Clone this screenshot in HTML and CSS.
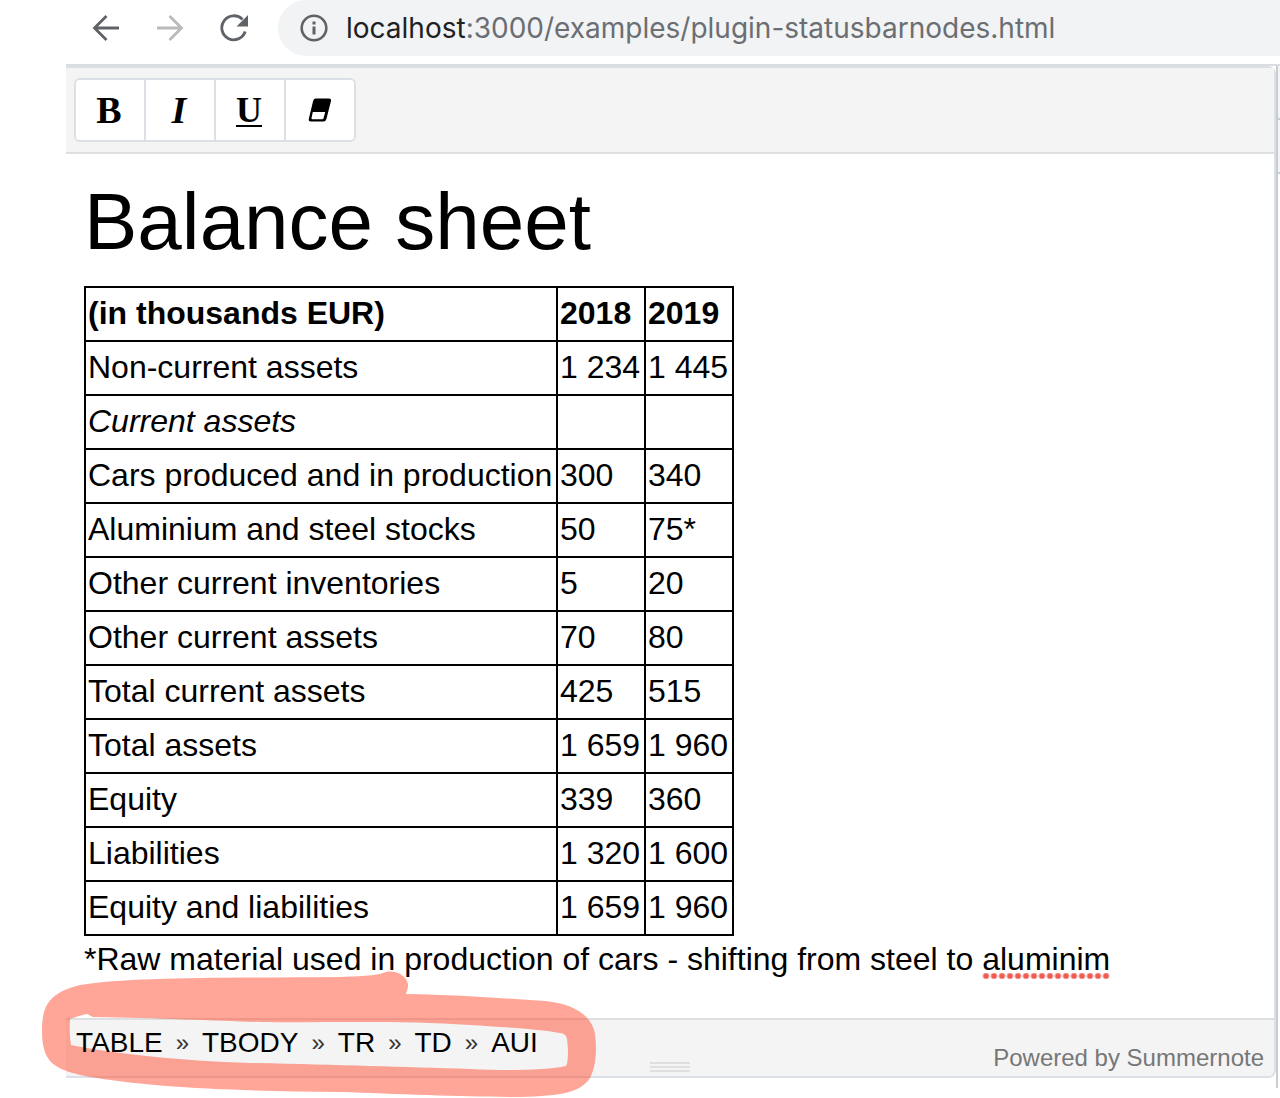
FILE: index.html
```html
<!DOCTYPE html>
<html lang="en">
<head>
<meta charset="utf-8">
<meta name="viewport" content="width=device-width, initial-scale=1">
<title>Summernote status bar nodes</title>
<link rel="stylesheet" href="styles.css">
</head>
<body>
<header class="browser">
  <nav class="browser-nav" aria-label="Browser">
    <button class="nav-button" type="button" aria-label="Back">
      <svg width="28" height="28" viewBox="0 0 28 28" fill="none" stroke="#5f6368" stroke-width="2.800"><path d="M27 14H3M14.500 2 2.500 14l12 12"/></svg>
    </button>
    <button class="nav-button" type="button" aria-label="Forward" disabled>
      <svg width="28" height="28" viewBox="0 0 28 28" fill="none" stroke="#bababc" stroke-width="2.800"><path d="M1 14h24M13.500 2l12 12-12 12"/></svg>
    </button>
    <button class="nav-button" type="button" aria-label="Reload">
      <svg width="28" height="28" viewBox="0 0 28 28"><path d="M25.200 17.500A12 12 0 1 1 22.500 5.500" fill="none" stroke="#5f6368" stroke-width="2.800"/><path d="M28 1v11.500H16.500z" fill="#5f6368"/></svg>
    </button>
  </nav>
  <div class="address">
    <svg class="info" width="28" height="28" viewBox="0 0 28 28"><circle cx="14" cy="14" r="12.300" fill="none" stroke="#5f6368" stroke-width="2.600"/><path d="M12.500 7.500h3v3h-3zM12.500 12.500h3v8h-3z" fill="#5f6368"/></svg>
    <div class="url" role="textbox" contenteditable="true" spellcheck="false" aria-label="Address"><span class="host">localhost</span>:3000/examples/plugin-statusbarnodes.html</div>
  </div>
</header>
<main class="page">
  <section class="editor">
    <div class="toolbar">
      <div class="button-group" role="group" aria-label="Font style">
        <button class="tool" type="button" aria-label="Bold">B</button>
        <button class="tool tool-italic" type="button" aria-label="Italic">I</button>
        <button class="tool tool-underline" type="button" aria-label="Underline">U</button>
        <button class="tool tool-eraser" type="button" aria-label="Remove font style">
          <svg width="24" height="24" viewBox="0 0 24 24"><path d="M7.500.500h13.300q2.800 0 2.200 2.500l-4.600 18q-.7 2.500-3 2.500H3q-2.800 0-2.200-2.500l4.300-18q.5-2.500 2.400-2.500z"/><path d="M4.800 14h12.400l-1.600 6q-.3 1.300-1.500 1.300H4.400q-1.200 0-.9-1.300z" fill="#fff"/></svg>
        </button>
      </div>
    </div>
    <article class="document">
      <h1 class="title">Balance sheet</h1>
      <table class="balance">
        <thead>
          <tr><th class="item">(in thousands EUR)</th><th class="year">2018</th><th class="year">2019</th></tr>
        </thead>
        <tbody>
          <tr><td>Non-current assets</td><td>1 234</td><td>1 445</td></tr>
          <tr><td><em>Current assets</em></td><td></td><td></td></tr>
          <tr><td>Cars produced and in production</td><td>300</td><td>340</td></tr>
          <tr><td>Aluminium and steel stocks</td><td>50</td><td>75*</td></tr>
          <tr><td>Other current inventories</td><td>5</td><td>20</td></tr>
          <tr><td>Other current assets</td><td>70</td><td>80</td></tr>
          <tr><td>Total current assets</td><td>425</td><td>515</td></tr>
          <tr><td>Total assets</td><td>1 659</td><td>1 960</td></tr>
          <tr><td>Equity</td><td>339</td><td>360</td></tr>
          <tr><td>Liabilities</td><td>1 320</td><td>1 600</td></tr>
          <tr><td>Equity and liabilities</td><td>1 659</td><td>1 960</td></tr>
        </tbody>
      </table>
      <p class="note">*Raw material used in production of cars - shifting from steel to <span class="misspelled">aluminim</span></p>
    </article>
    <footer class="statusbar">
      <div class="nodes"><span>TABLE</span><span class="sep">»</span><span>TBODY</span><span class="sep">»</span><span>TR</span><span class="sep">»</span><span>TD</span><span class="sep">»</span><span>AUI</span></div>
      <div class="grip"></div>
      <div class="powered">Powered by Summernote</div>
      <svg class="marker" width="556" height="128" viewBox="42 970 556 128" aria-hidden="true"><path fill="#ff4d31" fill-opacity=".5" fill-rule="evenodd" d="M42 1030C42 1003 52 992 80 985C130 977 220 978 340 977C370 976 378 975 386 972C400 969 412 981 407 990L406 994C460 995 500 998 545 1001C575 1004 592 1016 595 1034C597 1050 596 1066 590 1078C581 1092 562 1096 520 1097C470 1097 400 1094 340 1092C240 1091 150 1088 85 1076C53 1069 42 1062 42 1030Z M70 1019Q78 1016 87 1014L93 1017C160 1018 220 1021 260 1022C320 1023 400 1020 470 1025C500 1027 540 1029 560 1033C568 1034 567 1038 568 1050Q568 1064 566 1066C548 1070 510 1071 470 1069C400 1067 340 1065 250 1063C180 1061 110 1053 71 1045Q69 1034 70 1019Z"/></svg>
    </footer>
  </section>
  <aside class="side" aria-hidden="true">
    <div class="side-head"></div>
    <div class="side-tools"></div>
  </aside>
</main>
</body>
</html>
```
FILE: styles.css
```css
* { box-sizing: border-box; }

body {
  min-height: 100vh;
  margin: 0;
  background: #fff;
  color: #000;
  font-family: "Liberation Sans", Arial, sans-serif;
}

button { font: inherit; color: inherit; cursor: pointer; }
svg { display: block; flex: none; }

/* Browser bar */
.browser { display: flex; height: 64px; padding-left: 92px; }

.browser-nav {
  display: flex;
  align-items: center;
  gap: 36px;
  height: 56px;
  margin-right: 30px;
}

.nav-button { padding: 0; border: 0; background: none; }

.address {
  display: flex;
  flex: 1;
  align-items: center;
  gap: 18px;
  height: 56px;
  padding-left: 22px;
  border-radius: 28px 0 0 28px;
  background: #f1f3f4;
}

.url {
  color: #6b6e72;
  font-family: Inter, Roboto, sans-serif;
  font-size: 28px;
  white-space: nowrap;
}

.host { color: #202124; }

/* Editor frame */
.page {
  display: flex;
  margin-left: 66px;
  border-top: 2px solid #dadde2;
}

.editor {
  flex: 1;
  min-width: 0;
  margin-bottom: 10px;
  border: 2px solid #dae0e5;
  border-left: 0;
  border-radius: 0 8px 8px 0;
}

.toolbar {
  display: flex;
  padding: 10px 8px;
  border-bottom: 2px solid #dedfe0;
  background: #f4f4f4;
}

.button-group {
  display: flex;
  overflow: hidden;
  border: 2px solid #dae0e5;
  border-radius: 6px;
  background: #fff;
}

.tool {
  display: flex;
  align-items: center;
  justify-content: center;
  width: 70px;
  height: 60px;
  padding: 0 2px 0 0;
  border: 0;
  border-right: 2px solid #dae0e5;
  background: #fff;
  font-family: "Liberation Serif", serif;
  font-size: 38px;
  font-weight: bold;
}

.tool-italic { font-style: italic; }

.tool-underline {
  font-size: 36px;
  text-decoration: underline 2px;
  text-underline-offset: 3px;
}

.tool-eraser { width: 68px; padding: 0; border-right: 0; }

/* Document */
.document {
  padding: 20px 18px 35px;
  font-size: 32px;
  line-height: 48px;
}

.title {
  margin: 0 0 16px;
  font-size: 80px;
  font-weight: normal;
  line-height: 96px;
}

.balance { border-collapse: collapse; }

.balance th,
.balance td {
  height: 54px;
  padding: 1px 2px 3px;
  border: 2px solid #000;
  text-align: left;
  white-space: nowrap;
}

.item { width: 472px; }
.year { width: 88px; }
.note { margin: 0; line-height: 47px; }

.misspelled {
  padding-bottom: 2px;
  background: radial-gradient(circle, #ee5c52 2px, transparent 4px) 0 100% / 8px 6px repeat-x;
}

/* Status bar */
.statusbar {
  position: relative;
  display: grid;
  grid-template-columns: 1fr 40px 1fr;
  height: 58px;
  padding: 0 10px;
  border-top: 2px solid #dedfe0;
  border-radius: 0 0 6px 0;
  background: #f4f4f4;
}

.nodes {
  z-index: 1;
  display: flex;
  gap: 13px;
  font-size: 28px;
  line-height: 46px;
  white-space: nowrap;
}

.sep { color: #333; font-size: 24px; }

.grip {
  align-self: end;
  height: 10px;
  margin-bottom: 4px;
  background: repeating-linear-gradient(#dedfe0 0 2px, transparent 2px 4px);
}

.powered {
  align-self: end;
  justify-self: end;
  color: #777;
  font-size: 24px;
  line-height: 36px;
}

.marker {
  position: absolute;
  top: -50px;
  left: -24px;
  pointer-events: none;
}

/* Neighbouring panel */
.side { width: 4px; border-left: 2px solid #c9cdd2; }

.side-head,
.side-tools {
  height: 54px;
  border-bottom: 2px solid #c9cdd2;
  background: #f4f4f4;
}
```
